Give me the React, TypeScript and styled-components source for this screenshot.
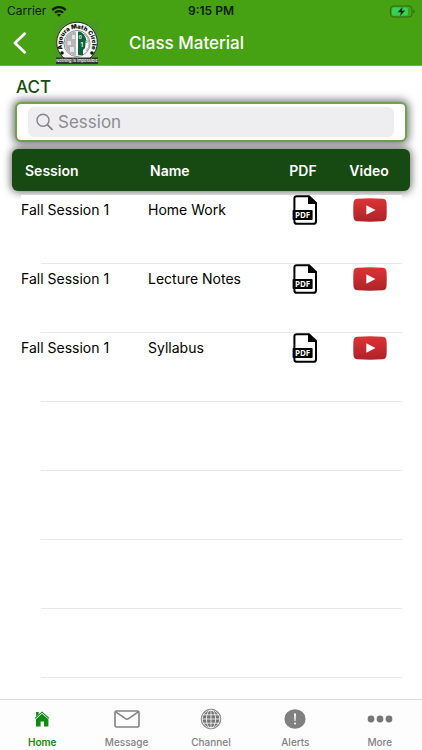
import React from "react";
import styled, { createGlobalStyle } from "styled-components";

const GlobalStyle = createGlobalStyle`
  *, *::before, *::after { box-sizing: border-box; }
  html, body, #root { height: 100%; }
  body {
    margin: 0;
    background: #fff;
    color: #000;
    font-family: Inter, "Liberation Sans", sans-serif;
  }
  button, input { font: inherit; }
`;

const Screen = styled.div`
  display: flex;
  flex-direction: column;
  height: 100vh;
  overflow: hidden;
`;

const Header = styled.header`
  background: #47a213;
  border-bottom: 1px solid #6fb548;
`;

const StatusBar = styled.div`
  display: grid;
  grid-template-columns: 1fr auto 1fr;
  align-items: center;
  height: 21px;
  padding: 1px 7px 0 7px;
  font-size: 12px;
  line-height: 20px;
  color: #0b1d05;
`;

const Carrier = styled.span`
  display: flex;
  align-items: center;
  gap: 5px;
`;

const Clock = styled.span`
  font-weight: 600;
`;

const Battery = styled.span`
  display: flex;
  justify-content: flex-end;
`;

const NavBar = styled.nav`
  display: grid;
  grid-template-columns: 55px 44px 1fr;
  align-items: center;
  height: 44px;
`;

const BackButton = styled.button`
  display: flex;
  align-items: center;
  height: 44px;
  padding: 0 0 0 12px;
  border: 0;
  background: none;
`;

const Title = styled.h1`
  margin: 0;
  padding-left: 30px;
  color: #fff;
  font-size: 17px;
  font-weight: 500;
  line-height: 44px;
`;

const Main = styled.main`
  display: flex;
  flex: 1;
  flex-direction: column;
  min-height: 0;
  padding: 0 12px;
  overflow: hidden;
`;

const Subject = styled.h2`
  margin: 10px 4px 4px;
  color: #174c10;
  font-size: 17px;
  font-weight: 500;
  line-height: 22px;
`;

const SearchFrame = styled.form`
  flex: none;
  height: 40px;
  margin: 0 3px 7px;
  padding: 3px 11px;
  border: 2px solid #6ba548;
  border-radius: 6px;
  background: #fff;
  box-shadow: 0 0 9px 2px rgba(0, 0, 0, 0.55);
`;

const SearchField = styled.label`
  display: flex;
  align-items: center;
  gap: 5px;
  height: 30px;
  padding-left: 8px;
  border-radius: 6px;
  background: #eeeef0;
`;

const SearchInput = styled.input`
  flex: 1;
  min-width: 0;
  padding: 0;
  border: 0;
  outline: 0;
  background: none;
  font-size: 17px;
  &::placeholder { color: #8c8c91; opacity: 1; }
`;

const MaterialTable = styled.table`
  display: block;
`;

const TableHead = styled.thead`
  display: block;
  margin-bottom: 4px;
  border-radius: 6px;
  background: #174a12;
  box-shadow: 0 0 9px 1px rgba(0, 0, 0, 0.6);
`;

const HeadRow = styled.tr`
  display: grid;
  grid-template-columns: 125px 1fr 66px 66px;
  align-items: center;
  height: 42px;
  padding: 0 8px 0 13px;
`;

const HeadCell = styled.th<{ $centered?: boolean }>`
  padding: 0;
  color: #fff;
  font-size: 14px;
  font-weight: 600;
  text-align: ${(p) => (p.$centered ? "center" : "left")};
`;

const TableBody = styled.tbody`
  display: block;
  margin: 0 8px 0 9px;
  background: #fff;
`;

const BodyRow = styled.tr`
  display: grid;
  grid-template-columns: 127px 1fr 66px 64px;
  align-items: start;
  height: 69px;
  background: linear-gradient(#e9e9ea, #e9e9ea) 20px 100% / 100% 1px no-repeat;
`;

const BodyCell = styled.td`
  padding: 0;
  font-size: 14px;
  line-height: 30px;
`;

const ActionCell = styled.td`
  display: flex;
  justify-content: center;
  padding: 0;
`;

const IconButton = styled.button`
  display: flex;
  align-items: center;
  height: 30px;
  padding: 0;
  border: 0;
  background: none;
`;

const EmptyRows = styled.div`
  flex: 1;
  margin: 0 8px 0 29px;
  background: repeating-linear-gradient(#fff 0 68px, #e9e9ea 68px 69px);
`;

const TabBar = styled.nav`
  display: grid;
  flex: none;
  grid-template-columns: repeat(5, 1fr);
  height: 51px;
  border-top: 1px solid #d9d9da;
  background: #fdfdfd;
`;

const Tab = styled.a<{ $active?: boolean }>`
  display: flex;
  flex-direction: column;
  align-items: center;
  padding-top: 8px;
  color: ${(p) => (p.$active ? "#108a10" : "#828282")};
  font-size: 10px;
  font-weight: ${(p) => (p.$active ? 600 : 500)};
  line-height: 14px;
  text-decoration: none;
`;

const TabIcon = styled.span`
  display: flex;
  align-items: center;
  justify-content: center;
  height: 22px;
  margin-bottom: 5px;
`;

const WifiIcon = () => (
  <svg width="16" height="12" viewBox="0 0 16 12" aria-hidden="true">
    <path d="M0.5 4.3C4.7 0 11.3 0 15.5 4.3L13.9 5.9C10.5 2.5 5.5 2.5 2.1 5.9Z" fill="#0b1d05" />
    <path d="M3.2 7C6 4.3 10 4.3 12.8 7L11.2 8.6C9.3 6.8 6.7 6.8 4.8 8.6Z" fill="#0b1d05" />
    <path d="M5.8 9.5C7.1 8.4 8.9 8.4 10.2 9.5L8 11.7Z" fill="#0b1d05" />
  </svg>
);

const BatteryIcon = () => (
  <svg width="25" height="13" viewBox="0 0 25 13" role="img" aria-label="Battery charging">
    <rect x="0.5" y="1" width="21.5" height="11" rx="3" fill="none" stroke="#2c6b12" strokeWidth="1" />
    <rect x="2" y="2.5" width="16" height="8" rx="1.6" fill="#38d05c" />
    <path d="M23.4 4.5V8.5Q24.8 8 24.8 6.5T23.4 4.5Z" fill="#2c6b12" />
    <path d="M12.9 1.4L7.5 7.2H10.8L9.7 11.6L15.3 5.6H11.9Z" fill="#071803" stroke="#38b244" strokeWidth="0.5" />
  </svg>
);

const BackIcon = () => (
  <svg width="15" height="22" viewBox="0 0 15 22" aria-hidden="true">
    <path d="M12.5 1.8L3 11L12.5 20.2" fill="none" stroke="#fff" strokeWidth="2.8" strokeLinecap="round" strokeLinejoin="round" />
  </svg>
);

const Logo = () => (
  <svg width="44" height="44" viewBox="0 0 44 44" role="img" aria-label="Agoura Math Circle">
    <rect width="44" height="44" fill="#499a22" />
    <circle cx="22" cy="21.5" r="20.3" fill="#f5f6f4" stroke="#26312a" strokeWidth="1" />
    <circle cx="22" cy="22.5" r="13" fill="#fff" stroke="#59605b" strokeWidth="0.7" />
    <path d="M21 10.5C14 10.5 10 15.5 10 22.5C10 29 14 33.5 21 35Z" fill="#b4b6b5" />
    <path d="M23 10.5C27 10.5 30 14 31 18L30 27L28 29V34H23Z" fill="#0b633d" />
    <path d="M29 13C33 15.5 34.5 21 33.8 26L31 30" fill="none" stroke="#a9b8af" strokeWidth="1.2" />
    <path d="M12.5 20H16V24H12.5ZM17 14H20V18H17ZM15 26H19V31H15Z" fill="#e4e5e4" />
    <text x="23.5" y="17.5" fontSize="5" fontWeight="700" fill="#e7f1eb">0</text>
    <text x="25.5" y="25.5" fontSize="6" fontWeight="700" fill="#e7f1eb">1</text>
    <text x="30" y="21.5" fontSize="4" fontWeight="700" fill="#5f7f6c">0</text>
    <circle cx="7" cy="32" r="1.8" fill="#101512" />
    <circle cx="37" cy="32" r="1.8" fill="#101512" />
    <path id="logo-arc" d="M8.2 29.2A15.2 15.2 0 1 1 35.8 29.2" fill="none" />
    <text fontSize="6" fontWeight="900" fill="#101512" textAnchor="middle">
      <textPath href="#logo-arc" startOffset="50%">Agoura Math Circle</textPath>
    </text>
    <rect x="1" y="36.5" width="42" height="6.5" fill="#2d362f" />
    <text x="22" y="41.2" fontSize="4" fontWeight="600" fill="#fff" textAnchor="middle">Nothing is impossible</text>
  </svg>
);

const SearchIcon = () => (
  <svg width="17" height="18" viewBox="0 0 17 18" aria-hidden="true">
    <circle cx="7" cy="7.3" r="6" fill="none" stroke="#85858a" strokeWidth="1.4" />
    <path d="M11.3 11.7L16 16.4" stroke="#85858a" strokeWidth="1.8" strokeLinecap="round" />
  </svg>
);

const PdfIcon = () => (
  <svg width="26" height="30" viewBox="0 0 26 30" aria-hidden="true">
    <path d="M4.8 1.2H17L24 8V26.4Q24 28.8 21.4 28.8H5Q2.4 28.8 2.4 26.4V3.4Q2.4 1.2 4.8 1.2Z" fill="#fff" stroke="#000" strokeWidth="2" />
    <path d="M16 0.5V9H24.8Z" fill="#000" />
    <rect x="0.6" y="15" width="20" height="10" rx="0.8" fill="#000" />
    <text x="10.6" y="22.9" fontFamily="Open Sans, sans-serif" fontSize="8" fontWeight="700" fill="#fff" textAnchor="middle">PDF</text>
  </svg>
);

const VideoIcon = () => (
  <svg width="34" height="24" viewBox="0 0 34 24" aria-hidden="true">
    <defs>
      <linearGradient id="video-red" x1="0" y1="0" x2="0" y2="1">
        <stop offset="0" stopColor="#dc3437" />
        <stop offset="1" stopColor="#ad2228" />
      </linearGradient>
    </defs>
    <path d="M4.5 0.7Q17 -0.1 29.5 0.7Q33.2 0.9 33.5 4.5Q34 12 33.5 19.5Q33.2 23.1 29.5 23.3Q17 24.1 4.5 23.3Q0.8 23.1 0.5 19.5Q0 12 0.5 4.5Q0.8 0.9 4.5 0.7Z" fill="url(#video-red)" />
    <path d="M13.3 7.2L22.5 12L13.3 16.7Z" fill="#fff" />
  </svg>
);

const HomeIcon = () => (
  <svg width="16" height="16" viewBox="0 0 16 16" aria-hidden="true">
    <path d="M1 7.3L8 1.2L15 7.3" fill="none" stroke="#108a10" strokeWidth="1.1" />
    <path d="M2.1 1H4.7V3.2L2.1 5.5Z" fill="#108a10" />
    <path d="M8 2.7L14.4 8.2V15.4H10V10.6H6.6V15.4H2V8.2Z" fill="#108a10" />
  </svg>
);

const MailIcon = () => (
  <svg width="26" height="18" viewBox="0 0 26 18" aria-hidden="true">
    <rect x="1" y="1" width="24" height="16" rx="1.6" fill="none" stroke="#828282" strokeWidth="1.6" />
    <path d="M1.7 1.8L11.5 8.7Q13 9.7 14.5 8.7L24.3 1.8" fill="none" stroke="#828282" strokeWidth="1.5" />
  </svg>
);

const GlobeIcon = () => (
  <svg width="22" height="22" viewBox="0 0 22 22" aria-hidden="true">
    <circle cx="11" cy="11" r="9.9" fill="#747474" stroke="#858585" strokeWidth="0.8" />
    <g fill="none" stroke="#fff" strokeWidth="0.8">
      <circle cx="11" cy="11" r="8.8" />
      <ellipse cx="11" cy="11" rx="4.6" ry="9" />
      <path d="M11 2V20M2 11H20M3 6.8H19M3 15.2H19" />
    </g>
  </svg>
);

const AlertIcon = () => (
  <svg width="22" height="20" viewBox="0 0 22 20" aria-hidden="true">
    <ellipse cx="11" cy="10" rx="10.6" ry="9.8" fill="#808080" />
    <path d="M10 4.5H12L11.5 12H10.5Z" fill="#fff" />
    <circle cx="11" cy="14.6" r="1" fill="#fff" />
  </svg>
);

const MoreIcon = () => (
  <svg width="26" height="8" viewBox="0 0 26 8" aria-hidden="true">
    <circle cx="4" cy="4" r="3.4" fill="#777" />
    <circle cx="13" cy="4" r="3.4" fill="#777" />
    <circle cx="22" cy="4" r="3.4" fill="#777" />
  </svg>
);

const materials = [
  { session: "Fall Session 1", name: "Home Work" },
  { session: "Fall Session 1", name: "Lecture Notes" },
  { session: "Fall Session 1", name: "Syllabus" },
];

const tabs = [
  { label: "Home", Icon: HomeIcon },
  { label: "Message", Icon: MailIcon },
  { label: "Channel", Icon: GlobeIcon },
  { label: "Alerts", Icon: AlertIcon },
  { label: "More", Icon: MoreIcon },
];

export default function App() {
  return (
    <Screen>
      <GlobalStyle />
      <Header>
        <StatusBar>
          <Carrier>Carrier <WifiIcon /></Carrier>
          <Clock>9:15 PM</Clock>
          <Battery><BatteryIcon /></Battery>
        </StatusBar>
        <NavBar>
          <BackButton type="button" aria-label="Back"><BackIcon /></BackButton>
          <Logo />
          <Title>Class Material</Title>
        </NavBar>
      </Header>
      <Main>
        <Subject>ACT</Subject>
        <SearchFrame role="search" onSubmit={(e) => e.preventDefault()}>
          <SearchField>
            <SearchIcon />
            <SearchInput type="text" placeholder="Session" aria-label="Session" />
          </SearchField>
        </SearchFrame>
        <MaterialTable>
          <TableHead>
            <HeadRow>
              <HeadCell scope="col">Session</HeadCell>
              <HeadCell scope="col">Name</HeadCell>
              <HeadCell scope="col" $centered>PDF</HeadCell>
              <HeadCell scope="col" $centered>Video</HeadCell>
            </HeadRow>
          </TableHead>
          <TableBody>
            {materials.map(({ session, name }) => (
              <BodyRow key={name}>
                <BodyCell>{session}</BodyCell>
                <BodyCell>{name}</BodyCell>
                <ActionCell>
                  <IconButton type="button" aria-label={`Open ${name} PDF`}><PdfIcon /></IconButton>
                </ActionCell>
                <ActionCell>
                  <IconButton type="button" aria-label={`Play ${name} video`}><VideoIcon /></IconButton>
                </ActionCell>
              </BodyRow>
            ))}
          </TableBody>
        </MaterialTable>
        <EmptyRows />
      </Main>
      <TabBar>
        {tabs.map(({ label, Icon }, i) => (
          <Tab key={label} href={`#${label.toLowerCase()}`} $active={i === 0} aria-current={i === 0 ? "page" : undefined}>
            <TabIcon><Icon /></TabIcon>
            {label}
          </Tab>
        ))}
      </TabBar>
    </Screen>
  );
}
